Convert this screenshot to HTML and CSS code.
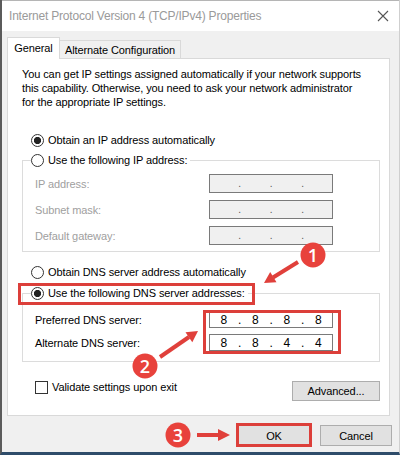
FILE: index.html
```
<!DOCTYPE html>
<html>
<head>
<meta charset="utf-8">
<link rel="stylesheet" href="styles.css">
</head>
<body>
<div class="window">
  <div class="titlebar">
    <span class="title">Internet Protocol Version 4 (TCP/IPv4) Properties</span>
    <svg class="close" width="12" height="12" viewBox="0 0 12 12"><path d="M1 1 L11 11 M11 1 L1 11" stroke="#555" stroke-width="1.1" fill="none"/></svg>
  </div>
  <div class="client">
    <div class="tabs">
      <div class="tab active">General</div>
      <div class="tab">Alternate Configuration</div>
    </div>
    <div class="panel">
      <p class="desc">You can get IP settings assigned automatically if your network supports<br>this capability. Otherwise, you need to ask your network administrator<br>for the appropriate IP settings.</p>
      <div class="opt first-opt"><span class="radio checked"></span>Obtain an IP address automatically</div>
      <fieldset class="group ip-group">
        <legend><span class="radio"></span>Use the following IP address:</legend>
        <div class="row disabled"><span class="lbl">IP address:</span><div class="ipbox"><i></i><b>.</b><i></i><b>.</b><i></i><b>.</b><i></i></div></div>
        <div class="row disabled"><span class="lbl">Subnet mask:</span><div class="ipbox"><i></i><b>.</b><i></i><b>.</b><i></i><b>.</b><i></i></div></div>
        <div class="row disabled"><span class="lbl">Default gateway:</span><div class="ipbox"><i></i><b>.</b><i></i><b>.</b><i></i><b>.</b><i></i></div></div>
      </fieldset>
      <div class="opt dns-opt"><span class="radio"></span>Obtain DNS server address automatically</div>
      <fieldset class="group dns-group">
        <legend><span class="radio checked"></span>Use the following DNS server addresses:</legend>
        <div class="row"><span class="lbl">Preferred DNS server:</span><div class="ipbox live"><i>8</i><b>.</b><i>8</i><b>.</b><i>8</i><b>.</b><i>8</i></div></div>
        <div class="row"><span class="lbl">Alternate DNS server:</span><div class="ipbox live"><i>8</i><b>.</b><i>8</i><b>.</b><i>4</i><b>.</b><i>4</i></div></div>
      </fieldset>
      <div class="bottom-row">
        <div class="check"><span class="checkbox"></span>Validate settings upon exit</div>
        <button class="btn adv">Advanced...</button>
      </div>
    </div>
    <div class="buttons">
      <button class="btn ok">OK</button>
      <button class="btn cancel">Cancel</button>
    </div>
  </div>
</div>
<svg class="annot" width="400" height="455" viewBox="0 0 400 455">
  <g fill="none" stroke="#dc3f3a" stroke-width="3">
    <rect x="19.5" y="284.5" width="234" height="19"/>
    <rect x="204.5" y="311.5" width="135" height="41"/>
    <rect x="237.5" y="424.5" width="73" height="21"/>
  </g>
  <g stroke="#e0403b" stroke-width="4" stroke-linecap="butt">
    <line x1="298" y1="262" x2="273" y2="277.5"/>
    <line x1="160" y1="357" x2="189" y2="337"/>
    <line x1="197" y1="435" x2="219" y2="435"/>
  </g>
  <g fill="#e0403b">
    <polygon points="264,283 276.5,282.3 270.2,272.1"/>
    <polygon points="198,331 192.3,342.2 185.5,332.2"/>
    <polygon points="230,435 218,429 218,441"/>
    <circle cx="313" cy="255" r="12.5" fill="#e8423c"/>
    <circle cx="145" cy="366" r="12.5" fill="#e8423c"/>
    <circle cx="178" cy="435" r="12.5" fill="#e8423c"/>
  </g>
  <g class="num" fill="#fff" text-anchor="middle">
    <text x="313" y="261.5">1</text>
    <text x="145" y="372.5">2</text>
    <text x="178" y="441.5">3</text>
  </g>
</svg>
</body>
</html>
```
FILE: styles.css
```
html, body {
  margin: 0;
  padding: 0;
}
body {
  position: relative;
  width: 400px;
  height: 455px;
  overflow: hidden;
  background: #3a3a3a;
  font-family: "Liberation Sans", Arial, sans-serif;
  font-size: 11px;
  letter-spacing: -0.1px;
  color: #000;
}
.window {
  width: 400px;
  height: 455px;
  box-sizing: border-box;
  background: #f0f0f0;
  border-left: 2px solid #5b5b5b;
  border-right: 1px solid #cfcfcf;
  border-bottom: 3px solid #2e4c6a;
}
.titlebar {
  height: 31px;
  box-sizing: border-box;
  background: #fff;
  border-top: 1px solid #b5b5b5;
  display: flex;
  align-items: center;
  justify-content: space-between;
  padding: 0 10px 0 7px;
}
.title {
  color: #9a9a9a;
  font-size: 12px;
  letter-spacing: -0.2px;
  white-space: nowrap;
}
.close {
  display: block;
}
.client {
  padding: 6px 9px 6px 5px;
}
.tabs {
  display: flex;
  align-items: flex-end;
  height: 22px;
  margin-bottom: -1px;
  position: relative;
  z-index: 1;
}
.tab {
  box-sizing: border-box;
  border: 1px solid #d9d9d9;
  text-align: center;
  white-space: nowrap;
}
.tab.active {
  width: 53px;
  height: 22px;
  background: #fff;
  border-bottom: none;
  line-height: 20px;
}
.tab:not(.active) {
  width: 121px;
  height: 18px;
  margin-bottom: 1px;
  border-left: none;
  border-bottom: none;
  background: #f0f0f0;
  line-height: 18px;
}
.panel {
  height: 358px;
  box-sizing: border-box;
  background: #fff;
  border: 1px solid #d9d9d9;
  padding: 8px 9px 0 14px;
}
.desc {
  margin: 0;
  line-height: 14px;
  white-space: nowrap;
}
.opt {
  display: flex;
  align-items: center;
  height: 16px;
  padding-left: 9px;
  white-space: nowrap;
}
.first-opt {
  margin-top: 23px;
}
.dns-opt {
  margin-top: 12px;
}
.radio {
  display: inline-block;
  flex: none;
  width: 13px;
  height: 13px;
  box-sizing: border-box;
  border: 1px solid #333;
  border-radius: 50%;
  background: #fff;
  margin-right: 4px;
}
.radio.checked {
  background: radial-gradient(circle, #222 0 3.3px, #fff 3.9px);
}
.group {
  margin: 4px 0 0 0;
  padding: 0 0 6px 12px;
  border: 1px solid #dcdcdc;
  min-inline-size: 0;
}
.dns-group {
  margin-top: 5px;
  padding-bottom: 10px;
}
.group legend {
  display: flex;
  align-items: center;
  height: 16px;
  padding: 0 3px 0 0;
  margin-left: -4px;
  white-space: nowrap;
}
.row {
  display: grid;
  grid-template-columns: 174px 124px;
  align-items: center;
  height: 19px;
  margin-top: 7px;
}
.ip-group .row:first-of-type {
  margin-top: 6px;
}
.dns-group .row {
  height: 17px;
  margin-top: 6px;
}
.dns-group .row:first-of-type {
  margin-top: 10px;
}
.row.disabled .lbl {
  color: #a0a0a0;
}
.ipbox {
  height: 100%;
  box-sizing: border-box;
  border: 1px solid #7a7a7a;
  background: #f0f0f0;
  display: grid;
  grid-template-columns: 1fr 4px 1fr 4px 1fr 4px 1fr;
  align-items: center;
  text-align: center;
  line-height: 14px;
}
.ipbox i {
  font-style: normal;
  font-size: 12px;
}
.ipbox b {
  font-weight: normal;
  color: #555;
  font-size: 10px;
}
.ipbox.live {
  background: #fff;
}
.ipbox.live b {
  color: #000;
  font-size: 12px;
}
.bottom-row {
  display: flex;
  justify-content: space-between;
  align-items: flex-start;
  margin-top: 19px;
}
.check {
  display: flex;
  align-items: center;
  height: 16px;
  margin-top: -2px;
  padding-left: 13px;
  white-space: nowrap;
}
.checkbox {
  width: 13px;
  height: 13px;
  box-sizing: border-box;
  border: 1px solid #333;
  background: #fff;
  margin-right: 4px;
}
.btn {
  font-family: inherit;
  font-size: 11px;
  letter-spacing: -0.1px;
  color: #000;
  background: #e1e1e1;
  border: 1px solid #adadad;
  padding: 0;
  box-sizing: border-box;
}
.adv {
  width: 88px;
  height: 20px;
}
.buttons {
  display: flex;
  justify-content: flex-end;
  gap: 10px;
  margin-top: 9px;
  margin-right: -2px;
}
.ok, .cancel {
  width: 72px;
  height: 21px;
}
.annot {
  position: absolute;
  left: 0;
  top: 0;
  pointer-events: none;
}
.num text {
  font-family: "Open Sans", "Noto Sans", sans-serif;
  font-size: 18px;
  font-weight: 600;
  letter-spacing: 0;
}
```
